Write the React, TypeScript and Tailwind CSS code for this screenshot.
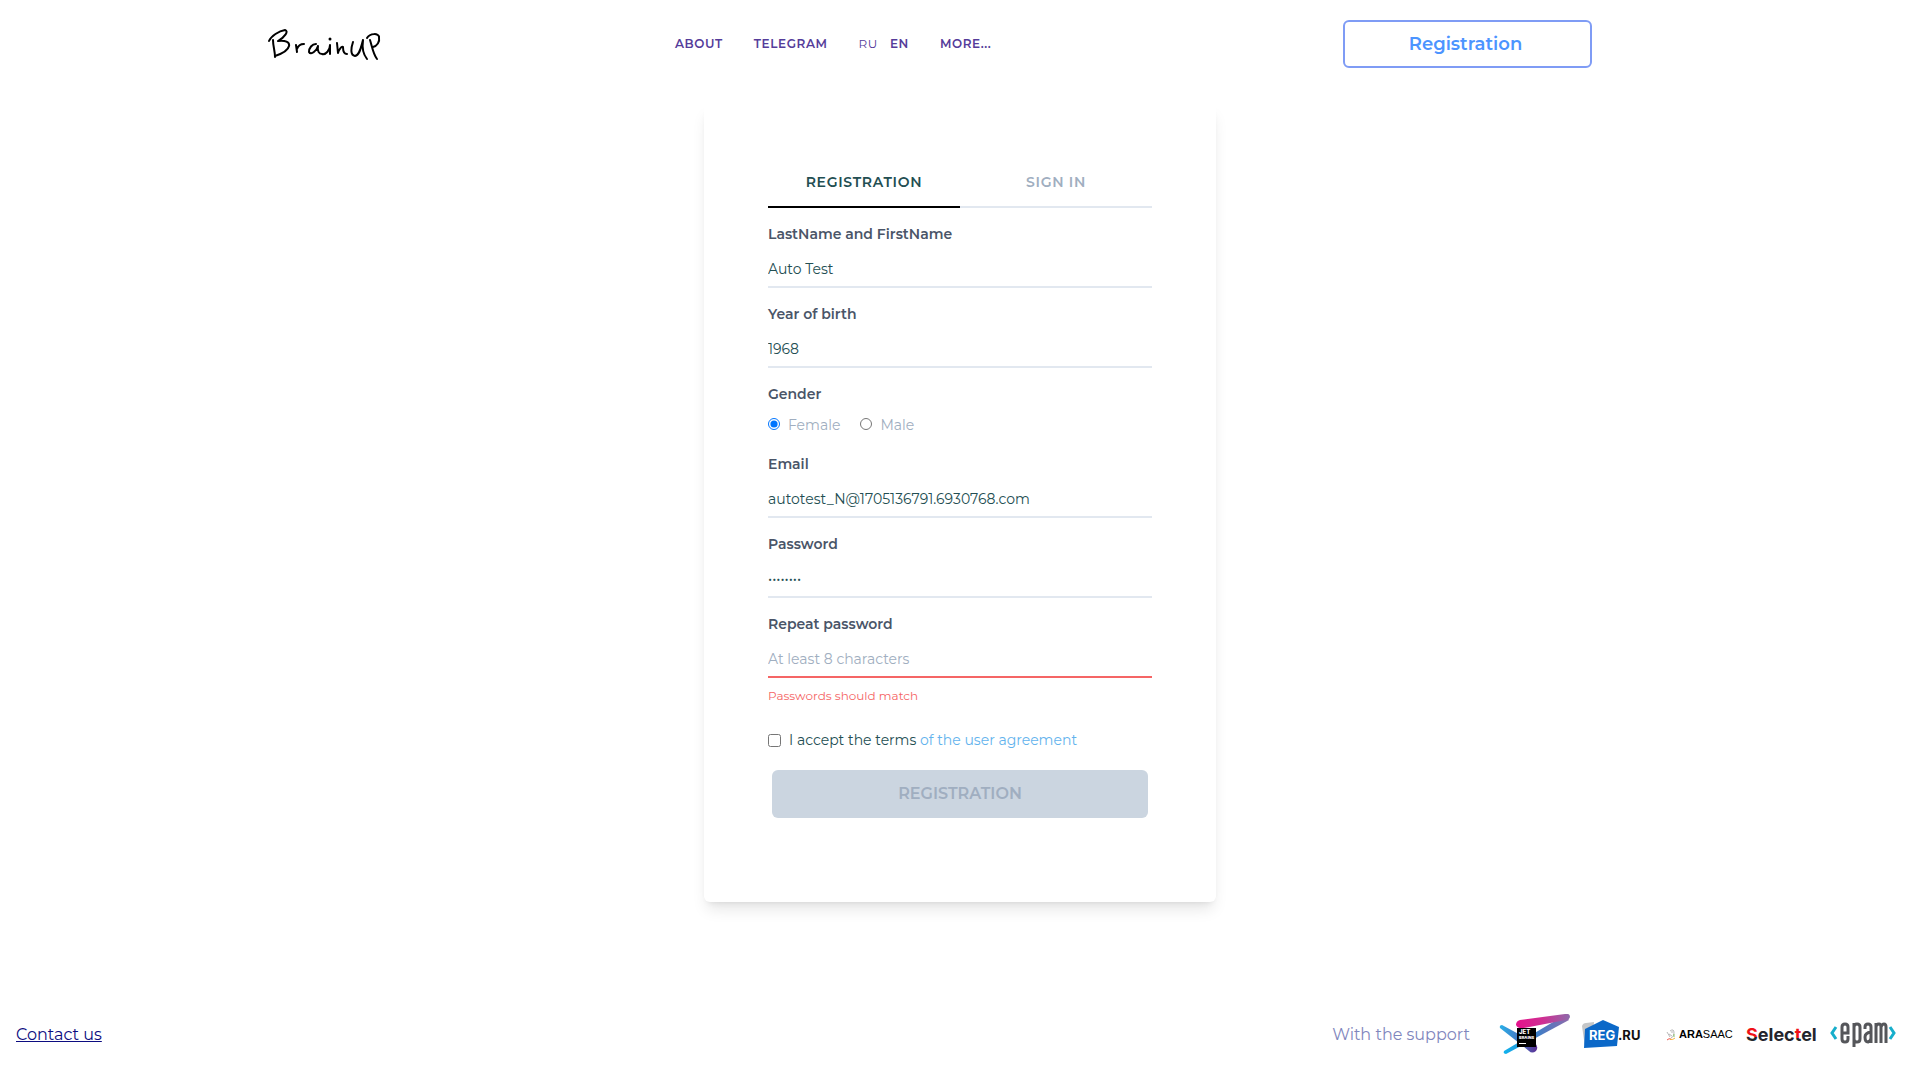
import React from "react";

function BrainUpLogo() {
  return (
    <svg viewBox="0 0 120 36" className="h-9 w-[120px]" role="img" aria-label="BrainUP" fill="none" stroke="#000" strokeLinecap="round" strokeLinejoin="round" strokeWidth="2">
      <path d="M5 14 C5 20 7 25 7 31" />
      <path d="M1 15 C3 10 11 5 17 4 C21 5 17 11 10 15 C17 14 22 16 21 20 C20 25 13 28 7 30" />
      <path d="M28 19 L29 26 M29 23 C30 20 33 18 36 18" />
      <path d="M48 18 C44 18 41 22 41 26 C43 30 49 24 50 20 C49 25 51 28 54 28 C58 29 62 24 62 19 L62 28" />
      <path d="M62 13 L62 13" strokeWidth="3" />
      <path d="M69 17 L70 27 C71 23 74 20 75 21 C75 24 75 28 79 28" />
      <path d="M85 16 C83 22 82 29 87 30 C92 29 93 21 95 14 C94 21 95 28 99 33" />
      <path d="M102 14 C104 20 105 28 109 33 M99 12 C102 7 111 7 111 11 C112 16 109 20 105 21" />
    </svg>
  );
}

function JetBrainsLogo() {
  return (
    <svg viewBox="0 0 72 42" className="h-[42px] w-[72px]" role="img" aria-label="JetBrains">
      <defs>
        <linearGradient id="jb-pink" x1="0" x2="1"><stop offset="0" stopColor="#e5128c" /><stop offset=".5" stopColor="#cf2f92" /><stop offset="1" stopColor="#8d6bab" /></linearGradient>
        <linearGradient id="jb-blue" x1="0" x2="1"><stop offset="0" stopColor="#10b3ee" /><stop offset=".5" stopColor="#3b7fc8" /><stop offset="1" stopColor="#8d6bab" /></linearGradient>
        <linearGradient id="jb-violet" x1="0" x2="1"><stop offset="0" stopColor="#28b0e8" /><stop offset=".6" stopColor="#4a6fc0" /><stop offset="1" stopColor="#5c2d91" /></linearGradient>
      </defs>
      <path d="M6 37 L67 1 L71 6 L8 40 Q5 40 6 37Z" fill="url(#jb-blue)" />
      <path d="M4 11 L37 29 Q41 33 38 37 Q34 40 31 37 L2 14 Q1 11 4 11Z" fill="url(#jb-violet)" />
      <path d="M22 6 L67 0 Q72 -1 72 3 Q71 6 68 6 L26 14 Q20 15 18 11 Q18 7 22 6Z" fill="url(#jb-pink)" />
      <rect x="19" y="14" width="19" height="19" fill="#000" />
      <text x="21" y="20" fontSize="6" fontWeight="800" fill="#fff" fontFamily="Inter, sans-serif">JET</text>
      <text x="21" y="25" fontSize="4" fontWeight="800" fill="#fff" fontFamily="Inter, sans-serif">BRAINS</text>
      <rect x="21" y="29" width="7" height="1" fill="#fff" />
    </svg>
  );
}

function RegLogo() {
  return (
    <svg viewBox="0 0 60 32" className="h-8 w-[60px]" role="img" aria-label="REG.RU">
      <path d="M0 7 Q1 4 4 4 L12 3 L10 26 L3 28Z" fill="#c4c6c8" />
      <path d="M3 10 L21 1 L37 8 L35 27 L2 29Z" fill="#0b68c8" />
      <text x="7" y="21" fontSize="13" fontWeight="700" fill="#fff" fontFamily="Inter, sans-serif">REG</text>
      <text x="36" y="21" fontSize="13" fontWeight="700" fill="#111" fontFamily="Inter, sans-serif">.RU</text>
    </svg>
  );
}

function ArasaacLogo() {
  return (
    <svg viewBox="0 0 68 20" className="h-5 w-[68px]" role="img" aria-label="ARASAAC">
      <path d="M1 7 L4 12 M4 6 Q8 3 8 8 Q8 12 5 13 M3 9 L6 11 M6 6 V8" fill="none" stroke="#999" strokeWidth=".7" />
      <path d="M1 15 Q3 13 5 14" stroke="#ef5b50" fill="none" />
      <path d="M4 14.500 Q7 15 9 13" stroke="#f3b33d" fill="none" />
      <path d="M8 12 V9" stroke="#8cc56a" />
      <text x="13" y="13" fontSize="11" fill="#000" fontFamily="Liberation Sans, sans-serif"><tspan fontWeight="700">ARA</tspan>SAAC</text>
    </svg>
  );
}

function SelectelLogo() {
  return (
    <svg viewBox="0 0 72 28" className="h-7 w-[72px]" role="img" aria-label="Selectel">
      <defs>
        <linearGradient id="sel-s" gradientUnits="userSpaceOnUse" x1="0" x2="0" y1="0" y2="28">
          <stop offset=".56" stopColor="#f01018" /><stop offset=".56" stopColor="#24252d" />
        </linearGradient>
        <linearGradient id="sel-t" gradientUnits="userSpaceOnUse" x1="0" x2="0" y1="0" y2="28">
          <stop offset=".6" stopColor="#f01018" /><stop offset=".6" stopColor="#24252d" />
        </linearGradient>
      </defs>
      <text x="0" y="20" fontSize="18" fontWeight="700" fill="#24252d" fontFamily="Inter, sans-serif"><tspan fill="url(#sel-s)">S</tspan>elec<tspan fill="url(#sel-t)">t</tspan>el</text>
    </svg>
  );
}

function EpamLogo() {
  return (
    <svg viewBox="0 0 66 26" className="h-[26px] w-[66px]" role="img" aria-label="epam" fill="none">
      <path d="M6 5 L2 11 L6 17 M60 5 L64 11 L60 17" stroke="#17aecb" strokeWidth="3" />
      <g stroke="#55565a" strokeWidth="3">
        <path d="M12 11 H18 V5 Q18 2 15 2 Q12 2 12 5 V17 Q12 20 15 20 Q18 20 18 17 V14" />
        <path d="M24 25 V1 M24 5 Q24 2 27 2 Q30 2 30 5 V17 Q30 20 27 20 Q24 20 24 17" />
        <path d="M35 7 V5 Q35 2 38 2 Q41 2 41 5 V21 M41 10 Q35 11 35 15 Q35 20 38 20 Q41 19 41 16" />
        <path d="M46 21 V1 M46 5 Q46 2 49 2 Q51 2 51 5 V21 M51 5 Q52 2 54 2 Q56 2 56 5 V21" />
      </g>
    </svg>
  );
}

const labelClass = "block text-sm font-semibold leading-5 text-[#4a5568]";

type FieldProps = {
  id: string;
  label: string;
  type?: string;
  value?: string;
  placeholder?: string;
  invalid?: boolean;
};

function Field({ id, label, type = "text", value, placeholder, invalid }: FieldProps) {
  return (
    <div className="pt-4">
      <label htmlFor={id} className={labelClass}>{label}</label>
      <input
        id={id}
        type={type}
        defaultValue={value}
        placeholder={placeholder}
        className={
          "block h-11 w-full border-b-2 bg-transparent pt-2 text-sm text-[#234e52] outline-none placeholder:text-[#a0aec0] " +
          (invalid ? "border-[#f56565]" : "border-[#e2e8f0]")
        }
      />
    </div>
  );
}

export default function App() {
  return (
    <div className="flex min-h-screen flex-col bg-white font-[Montserrat,Inter,sans-serif]">
      <header className="mx-auto grid w-full max-w-[1536px] grid-cols-[407fr_668fr_249fr] items-center py-5 pl-[76px] pr-[136px]">
        <a href="#home"><BrainUpLogo /></a>
        <nav className="flex items-center gap-[31px] text-xs font-semibold tracking-wider text-[#553c9a]">
          <a href="#about">ABOUT</a>
          <a href="#telegram">TELEGRAM</a>
          <span className="flex gap-3">
            <button type="button" className="font-normal tracking-wider">RU</button>
            <button type="button" className="tracking-wider">EN</button>
          </span>
          <a href="#more">MORE...</a>
        </nav>
        <button type="button" className="h-12 rounded-md border-2 border-[#7f9cf5] pr-1 text-lg font-semibold text-[#4c94ff]">Registration</button>
      </header>

      <main className="mx-auto mt-4 w-full max-w-lg rounded-md px-16 pb-[84px] pt-14 shadow-lg">
        <div className="grid grid-cols-2 text-sm font-semibold" role="tablist">
          <button type="button" role="tab" aria-selected="true" className="h-12 border-b-2 border-[#000000] pb-0.5 tracking-wider text-[#234e52]">REGISTRATION</button>
          <button type="button" role="tab" aria-selected="false" className="h-12 border-b-2 border-[#e2e8f0] pb-0.5 tracking-wider text-[#a0aec0]">SIGN IN</button>
        </div>
        <form>
          <Field id="name" label="LastName and FirstName" value="Auto Test" />
          <Field id="year" label="Year of birth" value="1968" />
          <fieldset className="pt-4">
            <legend className="contents"><span className={labelClass}>Gender</span></legend>
            <div className="flex h-[34px] items-center gap-5 pt-2 text-sm text-[#a0aec0]">
              <label className="flex items-center gap-2"><input type="radio" name="gender" defaultChecked className="mb-0.5 size-3" />Female</label>
              <label className="flex items-center gap-2"><input type="radio" name="gender" className="mb-0.5 size-3" />Male</label>
            </div>
          </fieldset>
          <Field id="email" label="Email" type="email" value="autotest_N@1705136791.6930768.com" />
          <Field id="password" label="Password" type="password" value="password" />
          <Field id="repeat" label="Repeat password" type="password" placeholder="At least 8 characters" invalid />
          <p className="mt-2 text-xs leading-5 text-[#f56565]">Passwords should match</p>
          <div className="mt-6 flex h-5 items-center gap-2 text-sm text-[#234e52]">
            <input id="terms" type="checkbox" className="size-[13px]" />
            <label htmlFor="terms">I accept the terms <a href="#agreement" className="text-[#63b3ed]">of the user agreement</a></label>
          </div>
          <div className="mt-5 px-1">
            <button type="submit" disabled className="h-12 w-full rounded-md bg-[#cbd5e0] font-semibold text-[#a0aec0]">REGISTRATION</button>
          </div>
        </form>
      </main>

      <footer className="mt-auto flex items-center justify-between px-4 pb-6">
        <a href="#contact" className="text-[#0c0c80] underline">Contact us</a>
        <div className="flex items-center">
          <span className="mr-7 text-[#7f86bd]">With the support</span>
          <div className="flex items-center gap-3 pr-2">
            <JetBrainsLogo />
            <RegLogo />
            <span className="pl-3"><ArasaacLogo /></span>
            <SelectelLogo />
            <EpamLogo />
          </div>
        </div>
      </footer>
    </div>
  );
}
